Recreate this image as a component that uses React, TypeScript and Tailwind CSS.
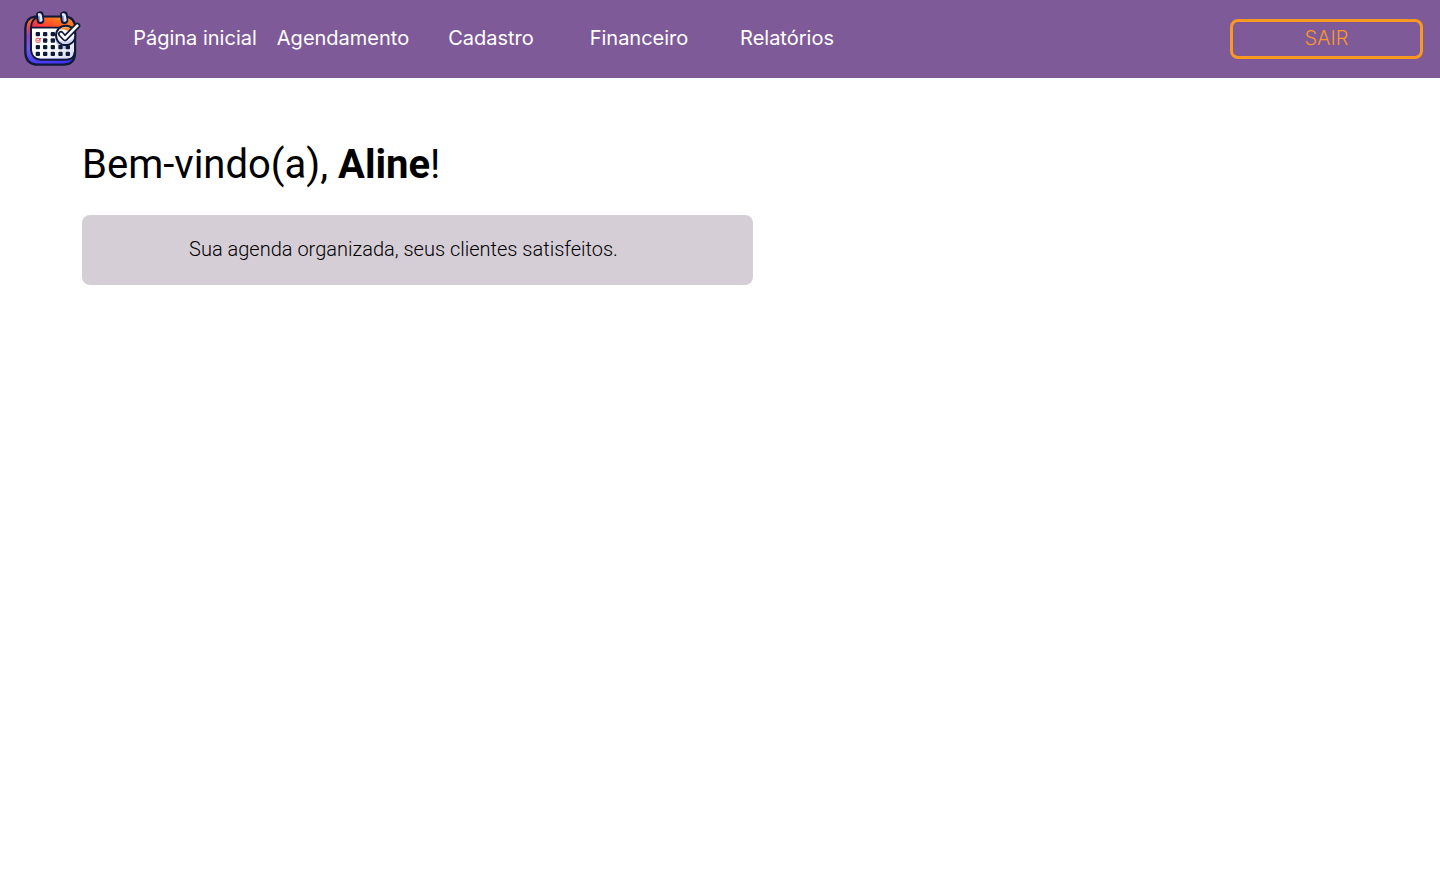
const links = ['Página inicial', 'Agendamento', 'Cadastro', 'Financeiro', 'Relatórios'];

const dotColumns = [66, 88, 111, 134, 156];
const dotRows = [90, 109, 129, 149];

function Logo() {
  return (
    <svg viewBox="0 0 216 210" className="h-[70px] w-[72px]" role="img" aria-label="Agenda">
      <defs>
        <linearGradient id="top" x1="0" x2="1" y1="1" y2="0.3">
          <stop offset="0" stopColor="#f0205c" />
          <stop offset="0.4" stopColor="#ff4a28" />
          <stop offset="0.8" stopColor="#ff7a1c" />
          <stop offset="1" stopColor="#ff9020" />
        </linearGradient>
        <linearGradient id="side" x1="0.2" x2="0.4" y1="0" y2="1">
          <stop offset="0" stopColor="#ff7a20" />
          <stop offset="0.18" stopColor="#e04a58" />
          <stop offset="0.35" stopColor="#8a48b4" />
          <stop offset="0.6" stopColor="#6a5ce4" />
          <stop offset="1" stopColor="#4434f4" />
        </linearGradient>
        <linearGradient id="paper" x1="0" x2="1" y1="0" y2="1">
          <stop offset="0.5" stopColor="#ffffff" />
          <stop offset="1" stopColor="#d4d8f4" />
        </linearGradient>
      </defs>
      <path
        d="M57 38H147Q176 39 177 70V148Q176 182 142 182H67Q30 182 28 145V73Q29 41 57 38Z"
        fill="url(#side)"
        stroke="#101a38"
        strokeWidth="7"
      />
      <path d="M66 41H146Q172 42 174 71H47Q48 44 66 41Z" fill="url(#top)" />
      <path d="M47 71H174V145Q174 164 154 164H72Q48 163 47 140Z" fill="url(#paper)" />
      <path
        d="M64 40Q46 46 45 70V138Q48 166 74 167H152Q175 166 176 144"
        fill="none"
        stroke="#101a38"
        strokeWidth="6"
      />
      <path d="M45 71H174" stroke="#101a38" strokeWidth="5" />
      <path d="M117 105Q122 132 149 136L160 128L124 96Z" fill="#bec5ec" />
      {dotRows.map((y) =>
        dotColumns.map((x) =>
          x === 66 && y === 109 ? null : (
            <rect key={`${x}-${y}`} x={x - 7} y={y - 6} width="13" height="13" rx="3" fill="#0e1b38" />
          ),
        ),
      )}
      <rect x="60" y="103" width="12" height="12" rx="3" fill="#fff" stroke="#f04452" strokeWidth="3" />
      <path d="M63 107l4 4 8-9" fill="none" stroke="#f04452" strokeWidth="3" />
      {[72, 144].map((x) => (
        <g key={x} transform={`rotate(-7 ${x} 41)`}>
          <rect x={x - 8} y="25" width="17" height="32" rx="8" fill="#8c9ee4" stroke="#101a38" strokeWidth="6" />
          <path d={`M${x - 2} 31Q${x + 5} 33 ${x + 3} 49`} fill="none" stroke="#e8edff" strokeWidth="7" strokeLinecap="round" />
        </g>
      ))}
      <circle cx="149" cy="94" r="29" fill="#f6f7ff" stroke="#101a38" strokeWidth="6" />
      <path d="M131 77Q139 68 153 70Q162 72 165 76L156 81Q142 74 131 77Z" fill="#ff922c" />
      <path d="M126 107A27 27 0 0 0 175 99Q152 123 126 107Z" fill="#cbd2f5" />
      <path d="M135 90L147 103L184 65" fill="none" stroke="#101a38" strokeWidth="18" strokeLinejoin="round" strokeLinecap="round" />
      <path d="M135 90L147 103L184 65" fill="none" stroke="#fff" strokeWidth="8" strokeLinejoin="round" strokeLinecap="round" />
    </svg>
  );
}

export default function App() {
  return (
    <div className="min-h-screen bg-white text-black">
      <header className="flex h-[78px] items-center bg-[#7f5a98] pr-[17px] pl-4 font-['Inter',sans-serif] text-xl">
        <a href="#inicio" className="shrink-0">
          <Logo />
        </a>
        <nav className="ml-[33px] flex pb-0.5 text-white">
          {links.map((label) => (
            <a key={label} href="#" className="w-[148px] text-center whitespace-nowrap">
              {label}
            </a>
          ))}
        </nav>
        <button
          type="button"
          className="ml-auto flex h-10 w-[193px] items-center justify-center rounded-lg border-3 border-[#fb9820] pb-0.5 font-light text-[#f8962a]"
        >
          SAIR
        </button>
      </header>
      <main className="px-[82px] pt-14 font-['Roboto',sans-serif]">
        <h1 className="text-[40px] leading-[62px]">
          Bem-vindo(a), <strong className="font-bold">Aline</strong>!
        </h1>
        <div className="mt-[19px] flex h-[70px] w-full max-w-[671px] items-center justify-center rounded-lg bg-[#d6ced7] pr-7 pb-0.5">
          <p className="text-xl font-light">Sua agenda organizada, seus clientes satisfeitos.</p>
        </div>
      </main>
    </div>
  );
}
